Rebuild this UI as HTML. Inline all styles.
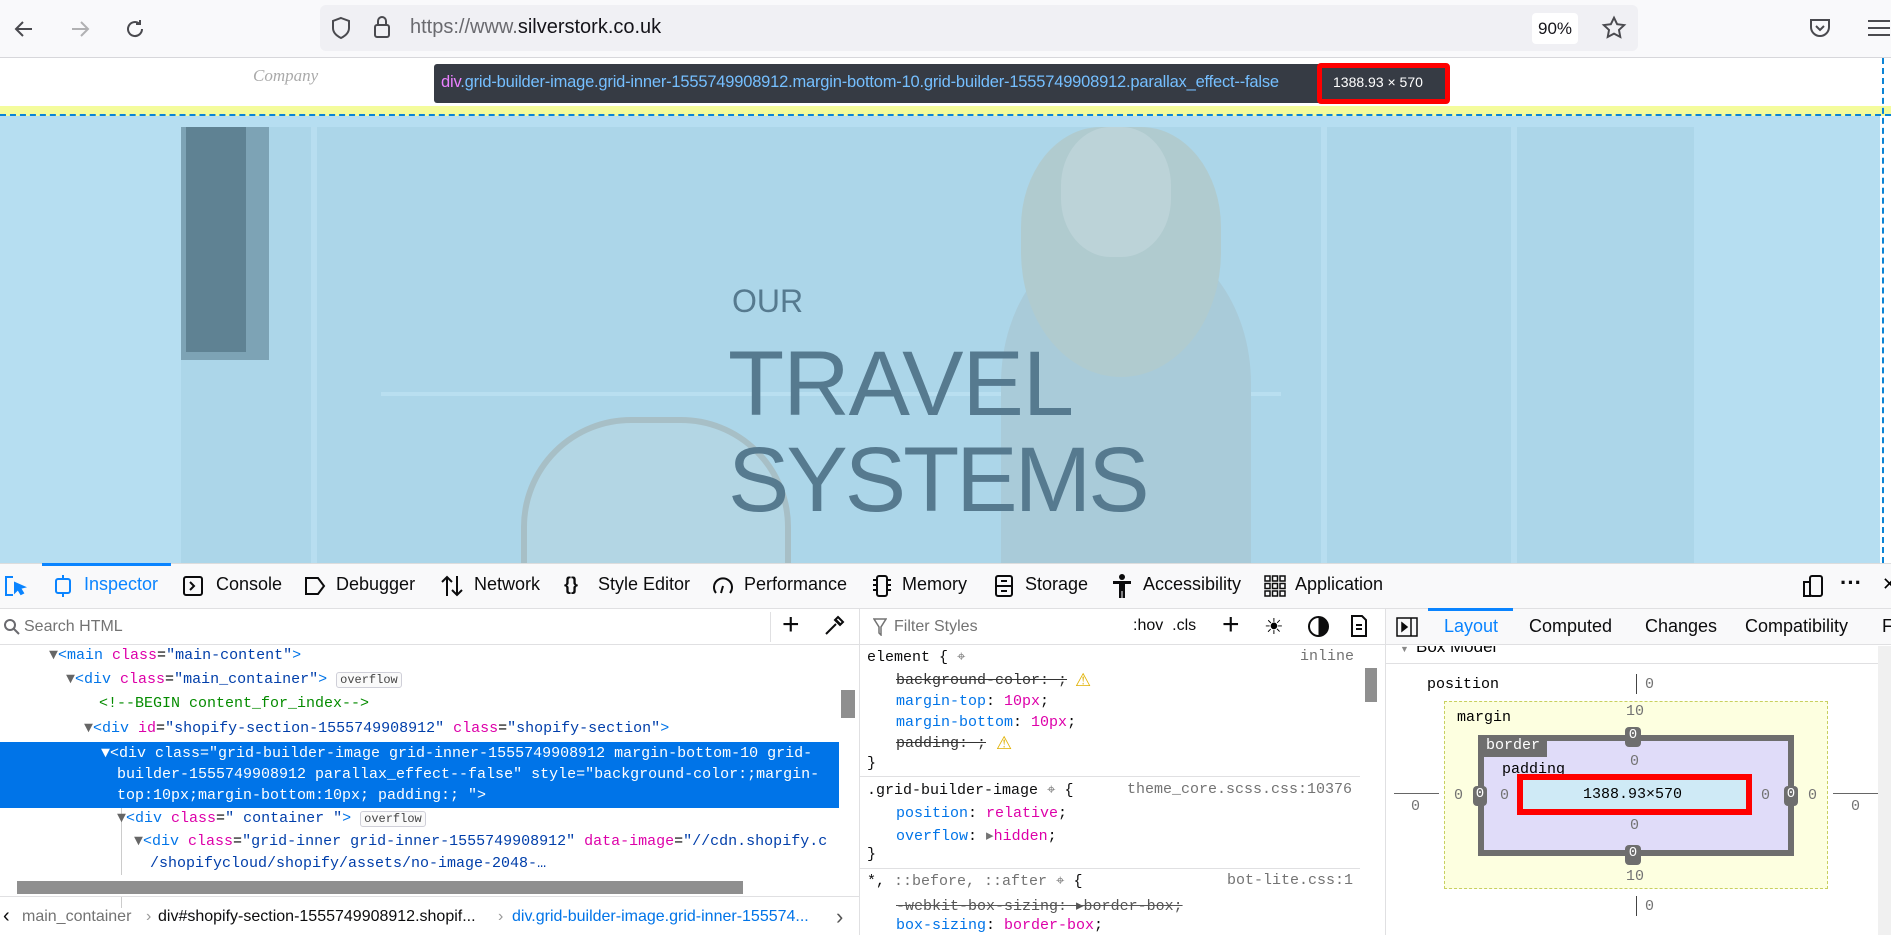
<!DOCTYPE html>
<html><head><meta charset="utf-8"><style>
*{margin:0;padding:0;box-sizing:border-box}
body{width:1891px;height:935px;overflow:hidden;position:relative;background:#fff;font-family:"Liberation Sans",sans-serif}
.a{position:absolute;white-space:nowrap}
.m{font-family:"Liberation Mono",monospace;font-size:15px}
.tag{color:#0074e8}.at{color:#dd00a9}.v{color:#003eaa}.cm{color:#058b00}
.tab{font-size:18px;color:#0c0c0d;top:574px}
.badge{border:1px solid #cfcfd8;border-radius:3px;font-size:12px;padding:0 3px;color:#444;background:#fafafa}
.r{font-family:"Liberation Mono",monospace;font-size:15px;color:#0c0c0d}
.p{color:#0074e8}.pv{color:#dd00a9}.g{color:#737373}
</style></head><body>
<div class="a" style="left:0;top:0;width:1891px;height:58px;background:#f9f9fb;border-bottom:1px solid #d7d7db"></div>
<svg class="a" style="left:12px;top:17px" width="24" height="24" viewBox="0 0 24 24" fill="none" stroke="#4a4a4f" stroke-width="2"><path d="M20 12H5M11 5l-7 7 7 7"/></svg>
<svg class="a" style="left:68px;top:17px" width="24" height="24" viewBox="0 0 24 24" fill="none" stroke="#b1b1b3" stroke-width="2"><path d="M4 12h15M13 5l7 7-7 7"/></svg>
<svg class="a" style="left:123px;top:17px" width="24" height="24" viewBox="0 0 24 24" fill="none" stroke="#4a4a4f" stroke-width="2"><path d="M19 12a7 7 0 1 1-3-5.7M17 3v4h-4"/></svg>
<div class="a" style="left:320px;top:5px;width:1318px;height:46px;background:#f0f0f4;border-radius:6px"></div>
<svg class="a" style="left:330px;top:16px" width="22" height="24" viewBox="0 0 22 24" fill="none" stroke="#4a4a4f" stroke-width="2"><path d="M11 2l8 3v7c0 5-4 8-8 10-4-2-8-5-8-10V5z"/></svg>
<svg class="a" style="left:372px;top:14px" width="20" height="26" viewBox="0 0 20 26" fill="none" stroke="#4a4a4f" stroke-width="2"><rect x="3" y="11" width="14" height="12" rx="2"/><path d="M6 11V7a4 4 0 0 1 8 0v4"/></svg>
<div class="a" style="left:410px;top:16px;font-size:20px;color:#6a6a6f">https://www.<span style="color:#15141a">silverstork.co.uk</span></div>
<div class="a" style="left:1532px;top:13px;width:46px;height:31px;background:#fff;border-radius:4px;font-size:17px;text-align:center;line-height:31px;color:#15141a">90%</div>
<svg class="a" style="left:1601px;top:15px" width="26" height="26" viewBox="0 0 24 24" fill="none" stroke="#4a4a4f" stroke-width="1.8"><path d="M12 2.5l2.9 6 6.5.8-4.8 4.5 1.2 6.5L12 17.2 6.2 20.3l1.2-6.5L2.6 9.3l6.5-.8z"/></svg>
<svg class="a" style="left:1808px;top:17px" width="24" height="22" viewBox="0 0 24 22" fill="none" stroke="#4a4a4f" stroke-width="2"><path d="M3 3h18v7a9 9 0 0 1-18 0z"/><path d="M8 9l4 4 4-4"/></svg>
<svg class="a" style="left:1866px;top:19px" width="25" height="18" viewBox="0 0 25 18" stroke="#4a4a4f" stroke-width="2"><path d="M2 2h22M2 9h22M2 16h22"/></svg>
<div class="a" style="left:253px;top:66px;font-family:'Liberation Serif',serif;font-style:italic;font-size:17px;color:#aaa">Company</div>
<div class="a" style="left:0;top:106px;width:1891px;height:10px;background:#f4fc9c"></div>
<div class="a" style="left:0;top:114px;width:1891px;border-top:2px dashed #0a84d6"></div>
<div class="a" style="left:1882px;top:58px;height:505px;border-left:2px dashed #0a84d6"></div>
<div class="a" style="left:0;top:116px;width:1880px;height:447px;background:#b6def1"></div>
<div class="a" style="left:181px;top:127px;width:1513px;height:436px;background:#acd6e9;overflow:hidden">
  <div class="a" style="left:0;top:0;width:88px;height:233px;background:#7da3b5"></div>
  <div class="a" style="left:5px;top:0;width:60px;height:225px;background:#5f8293"></div>
  <div class="a" style="left:130px;top:0;width:6px;height:436px;background:#b8def0"></div>
  <div class="a" style="left:200px;top:265px;width:900px;height:4px;background:#b9dff0"></div>
  <div class="a" style="left:1140px;top:0;width:6px;height:436px;background:#b8def0"></div>
  <div class="a" style="left:1330px;top:0;width:6px;height:436px;background:#b8def0"></div>
  <div class="a" style="left:820px;top:110px;width:250px;height:326px;background:#a9cbd9;border-radius:45% 45% 0 0"></div>
  <div class="a" style="left:840px;top:0;width:200px;height:250px;background:#b0cbcf;border-radius:40% 40% 50% 50%"></div>
  <div class="a" style="left:880px;top:0;width:110px;height:130px;background:#bcd3d8;border-radius:45%"></div>
  <div class="a" style="left:340px;top:290px;width:270px;height:200px;background:#b3d6e4;border:6px solid #a7bfc6;border-radius:110px 110px 0 0"></div>
</div>
<div class="a" style="left:732px;top:283px;font-size:32px;color:#567a8f">OUR</div>
<div class="a" style="left:728px;top:338px;font-size:92px;color:#567a8f;letter-spacing:-1px;line-height:92px">TRAVEL</div>
<div class="a" style="left:728px;top:434px;font-size:92px;color:#567a8f;letter-spacing:-3px;line-height:92px">SYSTEMS</div>
<div class="a" style="left:434px;top:64px;width:1013px;height:39px;background:#363b44;border-radius:3px"></div>
<div class="a" style="left:441px;top:73px;font-size:16.5px;color:#75bfff;letter-spacing:-0.2px"><span style="color:#ea80ff">div</span>.grid-builder-image.grid-inner-1555749908912.margin-bottom-10.grid-builder-1555749908912.parallax_effect--false</div>
<div class="a" style="left:1317px;top:63px;width:133px;height:41px;border:5px solid #f00;border-radius:4px;background:#363b44"></div>
<div class="a" style="left:1333px;top:74px;font-size:14px;color:#fff">1388.93 × 570</div>
<div class="a" style="left:0;top:563px;width:1891px;height:46px;background:#f9f9fa;border-top:1px solid #ddd;border-bottom:1px solid #e0e0e2"></div>
<div class="a" style="left:42px;top:563px;width:129px;height:3px;background:#0a84ff"></div>
<svg class="a" style="left:3px;top:574px" width="24" height="24" viewBox="0 0 24 24" fill="none" stroke="#0a84ff" stroke-width="2"><path d="M10 3H3v18h7"/><path d="M12 9l9 4-4 1 3 5-2 1-3-5-3 3z" fill="#0a84ff"/></svg>
<svg class="a" style="left:52px;top:574px" width="22" height="24" viewBox="0 0 22 24" fill="none" stroke="#0a84ff" stroke-width="2"><rect x="4" y="5" width="14" height="14" rx="2"/><path d="M11 1v4M11 19v4"/></svg>
<div class="a tab" style="left:84px;color:#0a84ff">Inspector</div>
<svg class="a" style="left:182px;top:575px" width="22" height="22" viewBox="0 0 22 22" fill="none" stroke="#0c0c0d" stroke-width="2"><rect x="2" y="2" width="18" height="18" rx="2"/><path d="M8 7l4 4-4 4"/></svg>
<div class="a tab" style="left:216px">Console</div>
<svg class="a" style="left:304px;top:576px" width="22" height="20" viewBox="0 0 22 20" fill="none" stroke="#0c0c0d" stroke-width="2"><path d="M2 2h12l6 8-6 8H2z"/></svg>
<div class="a tab" style="left:336px">Debugger</div>
<svg class="a" style="left:440px;top:574px" width="24" height="24" viewBox="0 0 24 24" fill="none" stroke="#0c0c0d" stroke-width="2"><path d="M7 22V3M2 8l5-5 5 5M17 2v19M12 16l5 5 5-5"/></svg>
<div class="a tab" style="left:474px">Network</div>
<div class="a tab" style="left:564px;font-weight:bold">{}</div>
<div class="a tab" style="left:598px">Style Editor</div>
<svg class="a" style="left:712px;top:575px" width="22" height="22" viewBox="0 0 22 22" fill="none" stroke="#0c0c0d" stroke-width="2"><path d="M4 18A9 9 0 1 1 18 18"/><path d="M11 11l-2 7"/></svg>
<div class="a tab" style="left:744px">Performance</div>
<svg class="a" style="left:871px;top:574px" width="22" height="24" viewBox="0 0 22 24" fill="none" stroke="#0c0c0d" stroke-width="2"><rect x="6" y="2" width="10" height="20" rx="2"/><path d="M2 6h4M2 11h4M2 16h4M16 6h4M16 11h4M16 16h4"/></svg>
<div class="a tab" style="left:902px">Memory</div>
<svg class="a" style="left:994px;top:574px" width="20" height="24" viewBox="0 0 20 24" fill="none" stroke="#0c0c0d" stroke-width="2"><rect x="2" y="2" width="16" height="20" rx="2"/><path d="M2 12h16M7 7h6M7 17h6"/></svg>
<div class="a tab" style="left:1025px">Storage</div>
<svg class="a" style="left:1112px;top:573px" width="20" height="26" viewBox="0 0 20 26" fill="#0c0c0d"><circle cx="10" cy="4" r="3"/><path d="M1 8h18v3h-6v14h-2.5v-7h-1v7H7V11H1z"/></svg>
<div class="a tab" style="left:1143px">Accessibility</div>
<svg class="a" style="left:1264px;top:575px" width="22" height="22" viewBox="0 0 22 22" fill="none" stroke="#0c0c0d" stroke-width="1.5"><rect x="1" y="1" width="5" height="5"/><rect x="8.5" y="1" width="5" height="5"/><rect x="16" y="1" width="5" height="5"/><rect x="1" y="8.5" width="5" height="5"/><rect x="8.5" y="8.5" width="5" height="5"/><rect x="16" y="8.5" width="5" height="5"/><rect x="1" y="16" width="5" height="5"/><rect x="8.5" y="16" width="5" height="5"/><rect x="16" y="16" width="5" height="5"/></svg>
<div class="a tab" style="left:1295px">Application</div>
<svg class="a" style="left:1801px;top:574px" width="24" height="24" viewBox="0 0 24 24" fill="none" stroke="#0c0c0d" stroke-width="2"><rect x="9" y="2" width="12" height="20" rx="2"/><rect x="3" y="8" width="6" height="14"/></svg>
<div class="a" style="left:1840px;top:570px;font-size:22px;font-weight:bold;color:#0c0c0d">···</div>
<div class="a" style="left:1882px;top:574px;font-size:18px">✕</div>
<div class="a" style="left:0;top:609px;width:859px;height:36px;border-bottom:1px solid #e0e0e2"></div>
<svg class="a" style="left:3px;top:618px" width="18" height="18" viewBox="0 0 18 18" fill="none" stroke="#6a6a6f" stroke-width="2"><circle cx="7" cy="7" r="5"/><path d="M11 11l5 5"/></svg>
<div class="a" style="left:24px;top:618px;font-size:16px;color:#737373">Search HTML</div>
<div class="a" style="left:770px;top:612px;height:30px;border-left:1px solid #e0e0e2"></div>
<div class="a" style="left:782px;top:608px;font-size:30px;color:#0c0c0d;font-weight:300">+</div>
<svg class="a" style="left:823px;top:615px" width="22" height="22" viewBox="0 0 22 22" fill="none" stroke="#0c0c0d" stroke-width="2"><path d="M3 19l10-10M12 4l6 6M15 2l5 5-3 3-5-5z"/></svg>
<div class="a" style="left:0;top:742px;width:839px;height:66px;background:#0074e8"></div>
<div class="a" style="left:841px;top:690px;width:14px;height:28px;background:#8f8f8f"></div>
<div class="a m" style="left:49px;top:647px"><span style="color:#666">▼</span><span class="tag">&lt;main </span><span class="at">class</span>=<span class="v">"main-content"</span><span class="tag">&gt;</span></div>
<div class="a m" style="left:66px;top:671px"><span style="color:#666">▼</span><span class="tag">&lt;div </span><span class="at">class</span>=<span class="v">"main_container"</span><span class="tag">&gt;</span> <span class="badge">overflow</span></div>
<div class="a m cm" style="left:99px;top:695px">&lt;!--BEGIN content_for_index--&gt;</div>
<div class="a m" style="left:84px;top:720px"><span style="color:#666">▼</span><span class="tag">&lt;div </span><span class="at">id</span>=<span class="v">"shopify-section-1555749908912"</span> <span class="at">class</span>=<span class="v">"shopify-section"</span><span class="tag">&gt;</span></div>
<div class="a m" style="left:101px;top:743px;color:#fff;line-height:21px;white-space:normal;width:730px">▼&lt;div class="grid-builder-image grid-inner-1555749908912 margin-bottom-10 grid-<br><span style="padding-left:16px">builder-1555749908912 parallax_effect--false" style="background-color:;margin-</span><br><span style="padding-left:16px">top:10px;margin-bottom:10px; padding:; "&gt;</span></div>
<div class="a" style="left:121px;top:808px;height:100px;border-left:1px solid #ccc"></div>
<div class="a m" style="left:117px;top:810px"><span style="color:#666">▼</span><span class="tag">&lt;div </span><span class="at">class</span>=<span class="v">" container "</span><span class="tag">&gt;</span> <span class="badge">overflow</span></div>
<div class="a m" style="left:134px;top:833px"><span style="color:#666">▼</span><span class="tag">&lt;div </span><span class="at">class</span>=<span class="v">"grid-inner grid-inner-1555749908912"</span> <span class="at">data-image</span>=<span class="v">"//cdn.shopify.c</span></div>
<div class="a m v" style="left:150px;top:855px">/shopifycloud/shopify/assets/no-image-2048-…</div>
<div class="a" style="left:0;top:875px;width:859px;height:22px;background:#fff;border-bottom:1px solid #e0e0e2"></div>
<div class="a" style="left:17px;top:881px;width:726px;height:13px;background:#8f8f8f"></div>
<div class="a" style="left:0;top:898px;width:859px;height:37px;font-size:16px;color:#0c0c0d">
<span class="a" style="left:3px;top:7px;font-size:20px">‹</span>
<span class="a" style="left:22px;top:10px;color:#737373">main_container</span>
<span class="a" style="left:146px;top:10px;color:#999">›</span>
<span class="a" style="left:158px;top:10px">div#shopify-section-1555749908912.shopif...</span>
<span class="a" style="left:498px;top:10px;color:#999">›</span>
<span class="a" style="left:512px;top:10px;color:#0074e8">div.grid-builder-image.grid-inner-155574...</span>
<span class="a" style="left:836px;top:6px;font-size:22px;color:#555">›</span></div>
<div class="a" style="left:859px;top:609px;height:326px;border-left:1px solid #e0e0e2"></div>
<div class="a" style="left:860px;top:609px;width:525px;height:36px;border-bottom:1px solid #e0e0e2"></div>
<svg class="a" style="left:873px;top:618px" width="14" height="18" viewBox="0 0 14 18" fill="none" stroke="#737373" stroke-width="1.5"><path d="M1 1h12L8 9v8l-2-2V9z"/></svg>
<div class="a" style="left:894px;top:618px;font-size:16px;color:#737373">Filter Styles</div>
<div class="a" style="left:1133px;top:617px;font-size:16px;color:#0c0c0d">:hov &nbsp;.cls</div>
<div class="a" style="left:1222px;top:608px;font-size:30px;color:#0c0c0d;font-weight:300">+</div>
<div class="a" style="left:1264px;top:614px;font-size:22px">☀</div>
<div class="a" style="left:1308px;top:616px;width:21px;height:21px;border-radius:50%;border:2px solid #0c0c0d;background:linear-gradient(90deg,#fff 50%,#0c0c0d 50%)"></div>
<svg class="a" style="left:1350px;top:614px" width="18" height="24" viewBox="0 0 18 24" fill="none" stroke="#0c0c0d" stroke-width="2"><path d="M2 2h10l4 4v16H2z"/><path d="M6 11h6M6 15h6"/></svg>
<div class="a" style="left:1365px;top:668px;width:12px;height:34px;background:#8f8f8f"></div>
<div class="a r" style="left:867px;top:648px">element { <span class="g">⌖</span></div>
<div class="a r g" style="left:1300px;top:648px">inline</div>
<div class="a r" style="left:896px;top:672px;text-decoration:line-through;color:#333">background-color: ;</div><div class="a" style="left:1075px;top:670px;color:#e0b000;font-size:18px">⚠</div>
<div class="a r" style="left:896px;top:693px"><span class="p">margin-top</span>: <span class="pv">10px</span>;</div>
<div class="a r" style="left:896px;top:714px"><span class="p">margin-bottom</span>: <span class="pv">10px</span>;</div>
<div class="a r" style="left:896px;top:735px;text-decoration:line-through;color:#333">padding: ;</div><div class="a" style="left:996px;top:733px;color:#e0b000;font-size:18px">⚠</div>
<div class="a r" style="left:867px;top:755px">}</div>
<div class="a" style="left:860px;top:776px;width:500px;border-top:1px solid #e0e0e2"></div>
<div class="a r" style="left:867px;top:781px">.grid-builder-image <span class="g">⌖</span> {</div>
<div class="a r g" style="left:1127px;top:781px">theme_core.scss.css:10376</div>
<div class="a r" style="left:896px;top:805px"><span class="p">position</span>: <span class="pv">relative</span>;</div>
<div class="a r" style="left:896px;top:826px"><span class="p">overflow</span>: <span class="g">▸</span><span class="pv">hidden</span>;</div>
<div class="a r" style="left:867px;top:846px">}</div>
<div class="a" style="left:860px;top:868px;width:500px;border-top:1px solid #e0e0e2"></div>
<div class="a r" style="left:867px;top:872px">*, <span class="g">::before, ::after ⌖</span> {</div>
<div class="a r g" style="left:1227px;top:872px">bot-lite.css:1</div>
<div class="a r" style="left:896px;top:896px;text-decoration:line-through;color:#555">-webkit-box-sizing: ▸border-box;</div>
<div class="a r" style="left:896px;top:917px"><span class="p">box-sizing</span>: <span class="pv">border-box</span>;</div>
<div class="a" style="left:1385px;top:609px;height:326px;border-left:1px solid #e0e0e2"></div>
<div class="a" style="left:1386px;top:609px;width:505px;height:36px;background:#f9f9fa;border-bottom:1px solid #e0e0e2"></div>
<div class="a" style="left:1428px;top:608px;width:85px;height:3px;background:#0a84ff"></div>
<svg class="a" style="left:1396px;top:616px" width="22" height="22" viewBox="0 0 22 22" fill="none" stroke="#0c0c0d" stroke-width="1.5"><rect x="1" y="2" width="20" height="18"/><path d="M15 2v18"/><path d="M6 7l5 4-5 4z" fill="#0c0c0d"/></svg>
<div class="a" style="left:1444px;top:616px;font-size:18px;color:#0a84ff">Layout</div>
<div class="a" style="left:1529px;top:616px;font-size:18px;color:#0c0c0d">Computed</div>
<div class="a" style="left:1645px;top:616px;font-size:18px;color:#0c0c0d">Changes</div>
<div class="a" style="left:1745px;top:616px;font-size:18px;color:#0c0c0d">Compatibility</div>
<div class="a" style="left:1882px;top:616px;font-size:18px;color:#0c0c0d">F</div>
<div class="a" style="left:1386px;top:646px;width:505px;height:12px;overflow:hidden"><span class="a" style="left:14px;top:-2px;font-size:9px;color:#888">▼</span><span class="a" style="left:30px;top:-9px;font-size:17px">Box Model</span></div>
<div class="a" style="left:1386px;top:663px;width:492px;border-top:1px solid #e0e0e2"></div>
<div class="a" style="left:1878px;top:646px;width:13px;height:289px;background:#f0f0f0"></div>
<div class="a m" style="left:1427px;top:676px;font-size:15px">position</div>
<div class="a" style="left:1636px;top:674px;height:20px;border-left:1px solid #444"></div>
<div class="a m g" style="left:1645px;top:676px">0</div>
<div class="a" style="left:1444px;top:701px;width:384px;height:188px;background:#fdffe0;border:1px dashed #c8d060"></div>
<div class="a m" style="left:1457px;top:709px">margin</div>
<div class="a m g" style="left:1626px;top:703px">10</div>
<div class="a" style="left:1478px;top:735px;width:316px;height:121px;background:#e0dcf9;border:6px solid #6e6e6e"></div>
<div class="a" style="left:1483px;top:735px;width:64px;height:22px;background:#6e6e6e;color:#fff;font-family:'Liberation Mono',monospace;font-size:15px;padding:2px 0 0 3px">border</div>
<div class="a m" style="left:1502px;top:761px">padding</div>
<div class="a m g" style="left:1630px;top:753px">0</div>
<div class="a m g" style="left:1630px;top:817px">0</div>
<div class="a" style="left:1517px;top:774px;width:235px;height:41px;background:#cfeaf6;border:6px solid #f00"></div>
<div class="a m" style="left:1583px;top:786px">1388.93×570</div>
<div class="a" style="left:1625px;top:727px;width:16px;height:20px;background:#6e6e6e;border-radius:4px;color:#fff;font-family:'Liberation Mono',monospace;font-size:14px;text-align:center">0</div>
<div class="a" style="left:1625px;top:845px;width:16px;height:20px;background:#6e6e6e;border-radius:4px;color:#fff;font-family:'Liberation Mono',monospace;font-size:14px;text-align:center">0</div>
<div class="a" style="left:1473px;top:786px;width:14px;height:20px;background:#6e6e6e;border-radius:4px;color:#fff;font-family:'Liberation Mono',monospace;font-size:14px;text-align:center">0</div>
<div class="a" style="left:1784px;top:786px;width:14px;height:20px;background:#6e6e6e;border-radius:4px;color:#fff;font-family:'Liberation Mono',monospace;font-size:14px;text-align:center">0</div>
<div class="a m g" style="left:1454px;top:787px">0</div>
<div class="a m g" style="left:1500px;top:787px">0</div>
<div class="a m g" style="left:1761px;top:787px">0</div>
<div class="a m g" style="left:1808px;top:787px">0</div>
<div class="a m g" style="left:1626px;top:868px">10</div>
<div class="a" style="left:1394px;top:793px;width:45px;border-top:1px solid #666"></div>
<div class="a" style="left:1833px;top:793px;width:45px;border-top:1px solid #666"></div>
<div class="a m g" style="left:1411px;top:798px">0</div>
<div class="a m g" style="left:1851px;top:798px">0</div>
<div class="a" style="left:1636px;top:896px;height:20px;border-left:1px solid #444"></div>
<div class="a m g" style="left:1645px;top:898px">0</div>
</body></html>
